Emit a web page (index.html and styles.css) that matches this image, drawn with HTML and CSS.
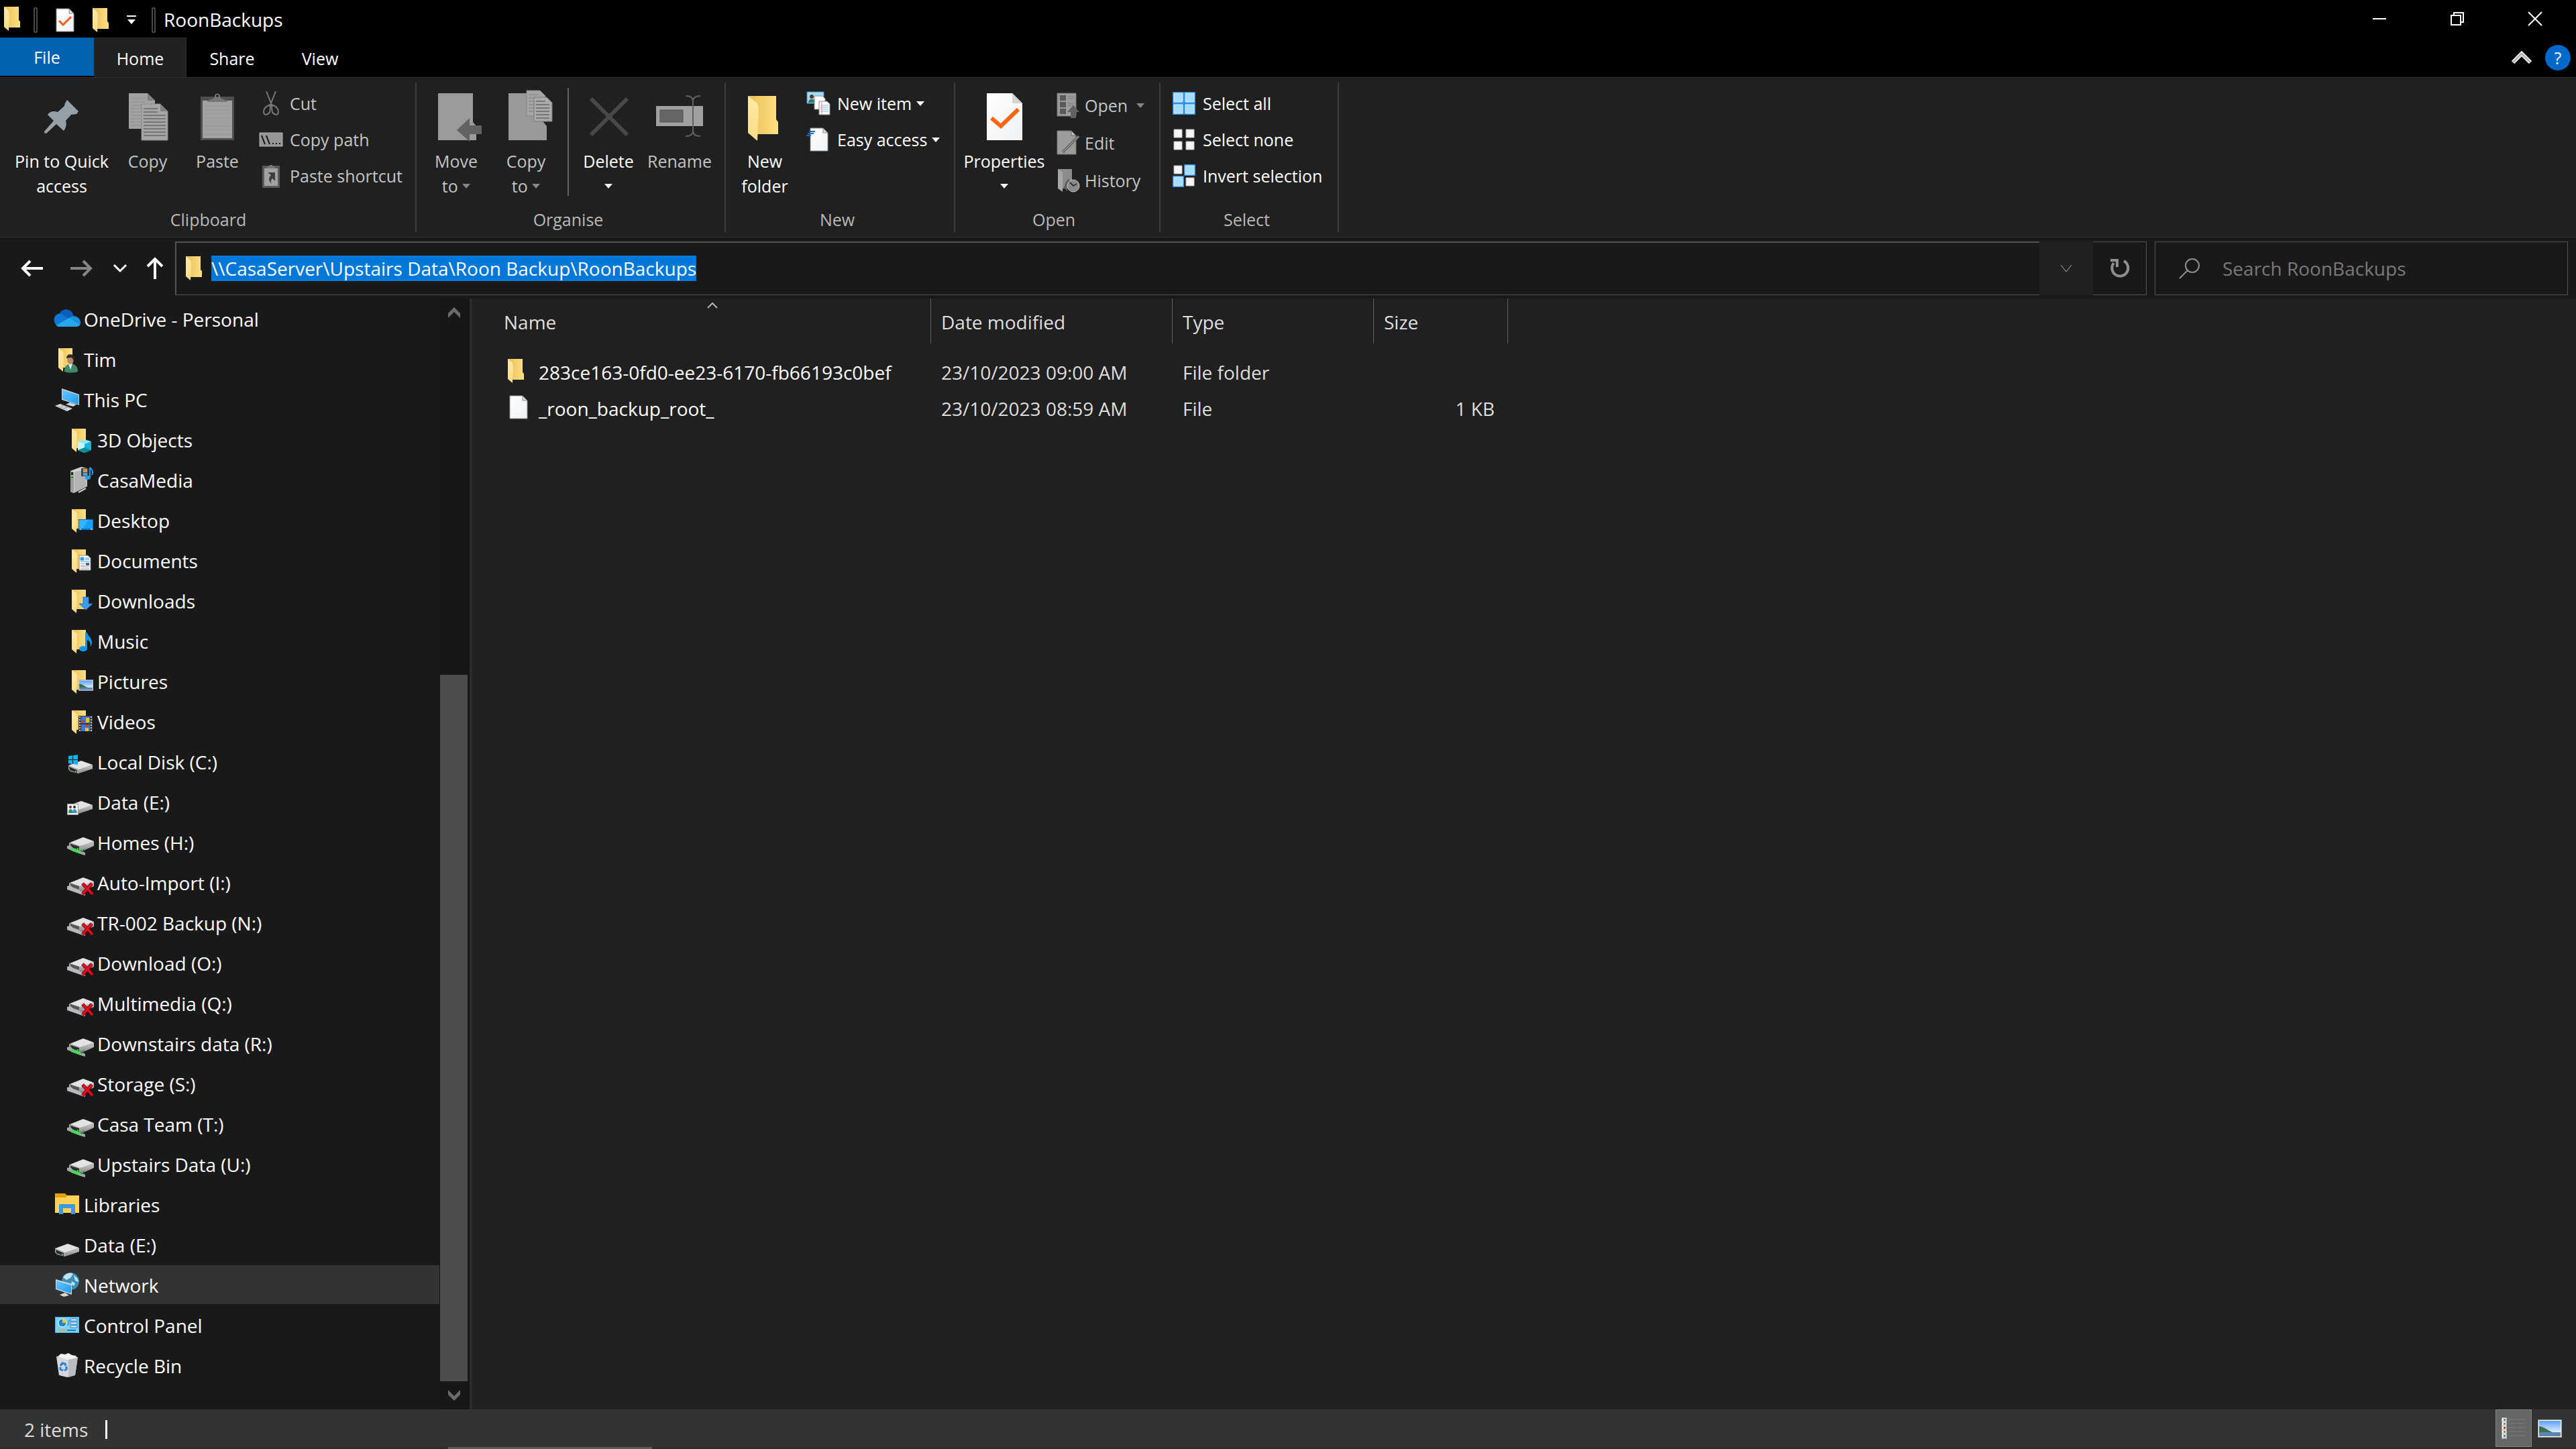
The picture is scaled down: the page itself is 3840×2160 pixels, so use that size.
FILE: index.html
```html
<!DOCTYPE html>
<html lang="en-GB">
<head>
    <meta charset="UTF-8">
    <meta name="viewport" content="width=device-width, initial-scale=1.0">
    <title>RoonBackups</title>
    <link rel="stylesheet" href="styles.css">
</head>
<body>
    <!-- Shared icons -->
    <svg class="sprite" width="0" height="0" aria-hidden="true">
        <defs>
            <linearGradient id="g-back" x1="0" y1="0" x2="1" y2="0">
                <stop offset="0" stop-color="#e8bf55"/>
                <stop offset="1" stop-color="#ffe083"/>
            </linearGradient>
            <linearGradient id="g-flap" x1="0" y1="0" x2="0" y2="1">
                <stop offset="0" stop-color="#ffe9a6"/>
                <stop offset="1" stop-color="#fbdc86"/>
            </linearGradient>
            <linearGradient id="g-paper" x1="0" y1="0" x2="1" y2="1">
                <stop offset="0" stop-color="#ffffff"/>
                <stop offset="1" stop-color="#eef1f4"/>
            </linearGradient>
            <linearGradient id="g-screen" x1="0" y1="0" x2="1" y2="1">
                <stop offset="0" stop-color="#6cc5ff"/>
                <stop offset="1" stop-color="#1a9bf5"/>
            </linearGradient>
            <linearGradient id="g-side" x1="0" y1="0" x2="0" y2="1">
                <stop offset="0" stop-color="#c9c9cb"/>
                <stop offset="1" stop-color="#8b8b8d"/>
            </linearGradient>
            <linearGradient id="g-sky" x1="0" y1="0" x2="0" y2="1">
                <stop offset="0" stop-color="#5c9ff5"/>
                <stop offset="1" stop-color="#e4f3ff"/>
            </linearGradient>
        </defs>
        <symbol id="folder" viewBox="0 0 24 36">
            <path d="M0 0h22v20l2 2v9H8L0 29z" fill="url(#g-back)"/>
            <path d="M0 0l7 6 1 6-1 24-7-6z" fill="url(#g-flap)"/>
        </symbol>
        <symbol id="folder-side" viewBox="0 0 40 40">
            <path d="M7 3h21v29H13l-6-2z" fill="url(#g-back)"/>
            <path d="M7 3l7 5 1 6-1 24-7-6z" fill="url(#g-flap)"/>
        </symbol>
        <symbol id="page" viewBox="0 0 28 36">
            <path d="M1 1h19l7 7v27H1z" fill="url(#g-paper)" stroke="#8a8a8a"/>
            <path d="M20 1v7h7z" fill="#dcdcdc" stroke="#8a8a8a"/>
        </symbol>
        <symbol id="page-check" viewBox="0 0 28 36">
            <path d="M1 1h19l7 7v27H1z" fill="url(#g-paper)" stroke="#8a8a8a"/>
            <path d="M20 1v7h7z" fill="#dcdcdc" stroke="#8a8a8a"/>
            <path d="M5 19l6 6L23 13" fill="none" stroke="#f4581a" stroke-width="3"/>
        </symbol>
        <symbol id="drive" viewBox="0 0 40 40">
            <path d="M2 25l19-7 17 6-21 8z" fill="#e3e3e5"/>
            <path d="M17 31l21-7v6l-21 7z" fill="url(#g-side)"/>
            <path d="M2 25l15 6v6L5 34l-3-3z" fill="#a8a8aa"/>
            <path d="M3 27l12 5v4L4 32z" fill="#2c2c2e"/>
            <path d="M12 33h2v2h-2z" fill="#35d13a"/>
        </symbol>
        <symbol id="netdrive" viewBox="0 0 40 40">
            <path d="M4 20l20-8 16 6-20 8z" fill="#e3e3e5"/>
            <path d="M19 25l21-7v7l-18 8-3-2z" fill="url(#g-side)"/>
            <path d="M3 20l16 5v7L3 28z" fill="#a8a8aa"/>
            <path d="M5 22l13 4v5L5 27z" fill="#2c2c2e"/>
            <path d="M15 28h2v2h-2z" fill="#35d13a"/>
            <path d="M0 25l5-1 4 4 18 7v4l-4-1L0 29z" fill="#a4a9a6"/>
            <path d="M6 27l14 5v5L6 32z" fill="#4fd35c"/>
            <path d="M20 33l6-4v2l-4 4z" fill="#1f9a3b"/>
        </symbol>
        <symbol id="netdrive-off" viewBox="0 0 40 40">
            <path d="M4 20l20-8 16 6-20 8z" fill="#e3e3e5"/>
            <path d="M19 25l21-7v7l-18 8-3-2z" fill="url(#g-side)"/>
            <path d="M3 20l16 5v7L3 28z" fill="#a8a8aa"/>
            <path d="M5 21l13 4v5L5 26z" fill="#57575a"/>
            <path d="M0 25l5-1 4 3 18 8v4l-4-1L0 30z" fill="#b9b9bd"/>
            <path d="M23 21l15 16M37 21L23 37" stroke="#7d0008" stroke-width="5"/>
            <path d="M23 21l15 16M37 21L23 37" stroke="#e81123" stroke-width="3"/>
        </symbol>
        <symbol id="picture" viewBox="0 0 36 27">
            <path d="M0 0h36v27H0z" fill="#9a9a9a"/>
            <path d="M1 1h34v25H1z" fill="#fff"/>
            <path d="M2 2h32v18H2z" fill="url(#g-sky)"/>
            <path d="M2 10c8 1 12 6 20 9l12 1H2z" fill="#39704d"/>
            <path d="M2 19h32v6H2z" fill="#5b86b4"/>
        </symbol>
    </svg>

    <header class="titlebar">
        <svg class="tb-icon" width="24" height="36"><use href="#folder"/></svg>
        <span class="tb-sep"></span>
        <button class="tb-btn" aria-label="Properties"><svg width="28" height="36"><use href="#page-check"/></svg></button>
        <button class="tb-btn" aria-label="New folder"><svg width="24" height="36"><use href="#folder"/></svg></button>
        <button class="tb-btn" aria-label="Customise toolbar">
            <svg width="14" height="14" viewBox="0 0 14 14"><path d="M0 0h14v2H0zM1 6h12l-6 7z" fill="#fff"/></svg>
        </button>
        <span class="tb-sep"></span>
        <h1 class="title">RoonBackups</h1>
        <div class="win-buttons">
            <button aria-label="Minimise"><svg width="20" height="20" viewBox="0 0 20 20"><path d="M0 9h20v2H0z" fill="#fff"/></svg></button>
            <button aria-label="Restore"><svg width="20" height="20" viewBox="0 0 20 20" fill="none" stroke="#fff" stroke-width="2"><path d="M1 5h14v14H1zM5 5V1h14v14h-4"/></svg></button>
            <button aria-label="Close"><svg width="20" height="20" viewBox="0 0 20 20"><path d="M0 0l20 20M20 0L0 20" stroke="#fff" stroke-width="2"/></svg></button>
        </div>
    </header>

    <nav class="tabs">
        <button class="tab tab-file">File</button>
        <button class="tab tab-active">Home</button>
        <button class="tab">Share</button>
        <button class="tab">View</button>
        <div class="tabs-right">
            <button aria-label="Minimise the ribbon"><svg width="30" height="20" viewBox="0 0 30 20"><path d="M2 17L15 4l13 13" fill="none" stroke="#fff" stroke-width="6"/><path d="M2 17L15 4l13 13" fill="none" stroke="#b5b5b5" stroke-width="3"/></svg></button>
            <button class="help" aria-label="Help">?</button>
        </div>
    </nav>

    <section class="ribbon">
        <div class="group group-clipboard">
            <div class="group-items">
                <button class="big big-pin">
                    <svg width="70" height="70" viewBox="0 0 70 70"><path d="M43 10l17 17-3 4-8 1-8 9c2 6 0 11-3 15L27 46 12 60l-3-1 0-2 14-16L14 32c3-5 9-6 15-4l10-9c0-3 2-6 4-9z" fill="#95a1a9"/></svg>
                    <span>Pin to Quick<br>access</span>
                </button>
                <button class="big dim">
                    <svg width="70" height="70" viewBox="0 0 70 70">
                        <path d="M7 0h28l11 11v42H7z" fill="#a2a2a2"/>
                        <path d="M35 0v11h11z" fill="#808080"/>
                        <path d="M10 8h22M10 13h22M10 18h22M10 23h15M10 28h15M10 33h15M10 38h15M10 43h15M10 48h15" stroke="#8e8e8e"/>
                        <path d="M26 16h28l11 11v43H26z" fill="#a6a6a6" stroke="#8a8a8a"/>
                        <path d="M54 16v11h11z" fill="#808080"/>
                        <path d="M29 23h21M29 28h21M29 33h33M29 38h33M29 43h33M29 48h33M29 53h33M29 58h33M29 63h33" stroke="#777" stroke-width="2"/>
                    </svg>
                    <span>Copy</span>
                </button>
                <button class="big dim">
                    <svg width="70" height="70" viewBox="0 0 70 70">
                        <path d="M10 5h50v65H10z" fill="#4e4e4e"/>
                        <path d="M13 11h44v56H13z" fill="#a2a2a2"/>
                        <path d="M14 19h42M14 25h42M14 31h42M14 37h42M14 43h42M14 49h42M14 55h42M14 61h42" stroke="#979797"/>
                        <path d="M19 13c2-4 12-4 12-8a4 4 0 0 1 8 0c0 4 10 4 12 8z" fill="#767676"/>
                        <circle cx="35" cy="4" r="3" fill="#333" stroke="#999"/>
                    </svg>
                    <span>Paste</span>
                </button>
                <div class="stack">
                    <button class="small dim">
                        <svg width="36" height="36" viewBox="0 0 36 36" fill="none" stroke="#777" stroke-width="2"><path d="M11 0l9 23M25 0l-9 23"/><path d="M17 20c-6 2-10 6-10 11 0 6 7 4 9 0 1-3 1-7 1-11zM19 20c6 2 10 6 10 11 0 6-7 4-9 0-1-3-1-7-1-11z"/></svg>
                        <span>Cut</span>
                    </button>
                    <button class="small dim">
                        <svg width="36" height="36" viewBox="0 0 36 36"><path d="M1 8h34v20H1z" fill="#969696" stroke="#b0b0b0"/><path d="M4 12l5 13M11 12l5 13" stroke="#111" stroke-width="2"/><path d="M20 23h2v2h-2zM25 23h2v2h-2zM30 23h2v2h-2z" fill="#111"/></svg>
                        <span>Copy path</span>
                    </button>
                    <button class="small dim">
                        <svg width="36" height="36" viewBox="0 0 36 36"><path d="M5 3h26v33H5z" fill="#5a5a5a"/><path d="M8 7h20v26H8z" fill="#a2a2a2"/><path d="M10 7c2-3 6-3 6-5h4c0 2 4 2 6 5z" fill="#777"/><path d="M13 13h11v13l-4-4c-2 2-3 5-1 8-5-4-5-9-1-13z" fill="#3f3f3f"/></svg>
                        <span>Paste shortcut</span>
                    </button>
                </div>
            </div>
            <div class="group-label">Clipboard</div>
        </div>

        <div class="group group-organise">
            <div class="group-items">
                <button class="big dim">
                    <svg width="70" height="70" viewBox="0 0 70 70"><path d="M8 0h52v43l5 6v21H8z" fill="#9b9b9b"/><path d="M36 55l19-18v11h18v13H55v11z" fill="#626262"/></svg>
                    <span>Move<br>to <i class="caret"></i></span>
                </button>
                <button class="big dim">
                    <svg width="70" height="70" viewBox="0 0 70 70"><path d="M9 0h52v43l5 6v21H9z" fill="#999"/><path d="M36-4h20l8 8v30H36z" fill="#a5a5a5" stroke="#868686"/><path d="M39 2h15M39 7h8M39 12h8M39 17h8M39 22h8M39 27h8" stroke="#808080"/><path d="M47 6h19l8 8v28H47z" fill="#aaa" stroke="#777"/><path d="M50 12h14M50 17h20M50 22h20M50 27h20M50 32h20M50 37h20" stroke="#777" stroke-width="2"/></svg>
                    <span>Copy<br>to <i class="caret"></i></span>
                </button>
                <span class="items-sep"></span>
                <button class="big big-delete">
                    <svg width="70" height="70" viewBox="0 0 70 70"><path d="M9 8l54 54M63 8L9 62" stroke="#484848" stroke-width="6"/></svg>
                    <span>Delete<br><i class="caret"></i></span>
                </button>
                <button class="big big-rename dim">
                    <svg width="70" height="70" viewBox="0 0 70 70"><path d="M0 19h70v30H0z" fill="#a0a0a0"/><path d="M6 25h34v18H6z" fill="#666" stroke="#505050"/><path d="M44 4c7 0 11 2 11 8v44c0 6-4 8-11 8M66 4c-7 0-11 2-11 8M55 56c0 6 4 8 11 8" fill="none" stroke="#5f5f5f" stroke-width="2"/></svg>
                    <span>Rename</span>
                </button>
            </div>
            <div class="group-label">Organise</div>
        </div>

        <div class="group group-new">
            <div class="group-items">
                <button class="big">
                    <svg width="70" height="70" viewBox="0 0 70 70"><path d="M10 4h42v35l3 4v18H22L10 58z" fill="url(#g-back)"/><path d="M10 4l14 11 2 8-2 48-14-12z" fill="url(#g-flap)"/></svg>
                    <span>New<br>folder</span>
                </button>
                <div class="stack">
                    <button class="small">
                        <svg width="36" height="36" viewBox="0 0 36 36"><path d="M1 1h25v17H1z" fill="#a6dbf8" stroke="#3d92cc"/><circle cx="8" cy="8" r="3" fill="#5a3b2a"/><path d="M3 17c0-7 10-7 10 0z" fill="#2f7d5b"/><path d="M12 7h12l4 4v16H12z" fill="#fff" stroke="#888"/><path d="M19 15h12l4 4v16H19z" fill="#fff" stroke="#888"/><path d="M21 21h12M21 24h12M21 27h12M21 30h12" stroke="#7db6e8"/><path d="M23 16v18" stroke="#e88"/></svg>
                        <span>New item <i class="caret"></i></span>
                    </button>
                    <button class="small">
                        <svg width="36" height="36" viewBox="0 0 36 36"><path d="M6 1h19l7 7v27H6z" fill="url(#g-paper)" stroke="#8a8a8a"/><path d="M25 1v7h7z" fill="#ddd" stroke="#8a8a8a"/><path d="M4 6h9M2 9h9M0 12h7" stroke="#1c6cb8" stroke-width="2"/></svg>
                        <span>Easy access <i class="caret"></i></span>
                    </button>
                </div>
            </div>
            <div class="group-label">New</div>
        </div>

        <div class="group group-open">
            <div class="group-items">
                <button class="big big-properties">
                    <svg width="70" height="70" viewBox="0 0 70 70"><path d="M9 0h38l15 15v55H9z" fill="url(#g-paper)"/><path d="M47 0v15h15z" fill="#d4d4d4"/><path d="M16 37l14 12 26-25" fill="none" stroke="#fb6514" stroke-width="6"/></svg>
                    <span>Properties<br><i class="caret"></i></span>
                </button>
                <div class="stack stack-open">
                    <button class="small dim">
                        <svg width="36" height="36" viewBox="0 0 36 36"><path d="M2 0h28v34H2z" fill="#9c9c9c" stroke="#777"/><path d="M6 3h9v8H6zM6 13h9v8H6zM6 23h9v8H6z" fill="#5a5a5a"/><path d="M18 5h9M18 8h9M18 15h9M18 18h9" stroke="#7a7a7a"/><path d="M26 18l9 10h-5v9h-8v-9h-5z" fill="#626262"/></svg>
                        <span>Open <i class="caret caret-gap"></i></span>
                    </button>
                    <button class="small dim">
                        <svg width="36" height="36" viewBox="0 0 36 36"><path d="M2 0h21l7 7v28H2z" fill="#9c9c9c" stroke="#777"/><path d="M23 0v7h7z" fill="#c2c2c2" stroke="#666"/><path d="M34 8L10 32" stroke="#686868" stroke-width="4"/><path d="M34 8L10 32" stroke="#aaa"/></svg>
                        <span>Edit</span>
                    </button>
                    <button class="small dim">
                        <svg width="36" height="36" viewBox="0 0 36 36"><path d="M3 1h21v29H3z" fill="#8c8c8c"/><path d="M3 1l7 5v29l-7-5z" fill="#a6a6a6"/><circle cx="26" cy="26" r="9" fill="#8a8a8a" stroke="#c0c0c0"/><path d="M21 21l5 5 5-3" fill="none" stroke="#333" stroke-width="2"/><path d="M20 17c-5 3-6 8-5 13l-3-3" fill="none" stroke="#5d5d5d" stroke-width="3"/></svg>
                        <span>History</span>
                    </button>
                </div>
            </div>
            <div class="group-label">Open</div>
        </div>

        <div class="group group-select">
            <div class="group-items">
                <div class="stack">
                    <button class="small">
                        <svg width="36" height="36" viewBox="0 0 36 36"><path d="M1 1h34v34H1z" fill="#2f93e6"/><path d="M3 3h13v13H3zM20 3h13v13H20zM3 20h13v13H3zM20 20h13v13H20z" fill="#a9dbff" stroke="#d9f0ff"/></svg>
                        <span>Select all</span>
                    </button>
                    <button class="small">
                        <svg width="36" height="36" viewBox="0 0 36 36"><path d="M3 3h12v12H3zM21 3h12v12H21zM3 21h12v12H3zM21 21h12v12H21z" fill="#f6f6f6" stroke="#bdbdbd"/></svg>
                        <span>Select none</span>
                    </button>
                    <button class="small">
                        <svg width="36" height="36" viewBox="0 0 36 36"><path d="M3 3h12v12H3zM21 21h12v12H21z" fill="#f6f6f6" stroke="#bdbdbd"/><path d="M18 1h17v17H18zM1 18h17v17H1z" fill="#2f93e6"/><path d="M20 3h13v13H20zM3 20h13v13H3z" fill="#a9dbff" stroke="#d9f0ff"/></svg>
                        <span>Invert selection</span>
                    </button>
                </div>
            </div>
            <div class="group-label">Select</div>
        </div>
    </section>

    <div class="addressbar">
        <button class="nav nav-back" aria-label="Back"><svg width="32" height="24" viewBox="0 0 32 24"><path d="M13 1L2 12l11 11M2 12h30" fill="none" stroke="#fff" stroke-width="4"/></svg></button>
        <button class="nav nav-forward" aria-label="Forward"><svg width="32" height="24" viewBox="0 0 32 24"><path d="M19 1l11 11-11 11M30 12H0" fill="none" stroke="#868686" stroke-width="4"/></svg></button>
        <button class="nav nav-recent" aria-label="Recent locations"><svg width="20" height="12" viewBox="0 0 20 12"><path d="M1 1l9 9 9-9" fill="none" stroke="#fff" stroke-width="3"/></svg></button>
        <button class="nav nav-up" aria-label="Up"><svg width="24" height="32" viewBox="0 0 24 32"><path d="M1 13L12 2l11 11M12 2v30" fill="none" stroke="#fff" stroke-width="4"/></svg></button>
        <div class="path">
            <svg width="24" height="36"><use href="#folder"/></svg>
            <input id="path" type="text" aria-label="Address" spellcheck="false" value="\\CasaServer\Upstairs Data\Roon Backup\RoonBackups">
        </div>
        <button class="path-drop" aria-label="Previous locations"><svg width="18" height="12" viewBox="0 0 18 12"><path d="M1 1l8 10 8-10" fill="none" stroke="#b4b4b4"/></svg></button>
        <button class="path-refresh" aria-label="Refresh"><svg width="30" height="30" viewBox="0 0 30 30"><path d="M6 7a12 12 0 1 0 15-3" fill="none" stroke="#8f8f8f" stroke-width="4"/><path d="M1 1h12v12H9V5H1z" fill="#8f8f8f"/></svg></button>
        <div class="search">
            <svg width="32" height="32" viewBox="0 0 32 32" fill="none" stroke="#8f8f8f" stroke-width="2"><circle cx="20" cy="12" r="10"/><path d="M13 19L1 31"/></svg>
            <input type="search" aria-label="Search" placeholder="Search RoonBackups">
        </div>
    </div>

    <main class="content">
        <aside class="sidebar">
            <ul class="tree">
                <li><a href="#"><svg viewBox="0 0 40 40"><path d="M8 13C12 2 27 3 30 15l-8 9z" fill="#0a5fb8"/><path d="M3 28C-3 18 4 10 11 12l13 7-16 12z" fill="#0f78d4"/><path d="M22 19c8-8 18-2 18 6 0 3-1 4-3 5z" fill="#1790df"/><path d="M4 29l19-11 16 10c-1 2-3 3-5 3H8c-2 0-4-1-4-2z" fill="#28a8ea"/></svg>OneDrive - Personal</a></li>
                <li><a href="#"><svg viewBox="0 0 40 40"><use href="#folder-side"/><path d="M16 38c0-8 3-11 10-12 7 1 10 5 10 12-6 2-14 2-20 0z" fill="#3f8a68"/><path d="M22 26l3 9 3-9z" fill="#e8eef0"/><ellipse cx="25" cy="20" rx="5" ry="7" fill="#b98d6a"/><path d="M19 18c0-8 13-8 12 2l-2 2c0-4-2-5-4-5z" fill="#2e2a28"/></svg>Tim</a></li>
                <li><a href="#"><svg viewBox="0 0 40 40"><path d="M12 3l26 9v16l-26-8z" fill="#cfd6dc"/><path d="M13 5l24 8v14l-24-8z" fill="url(#g-screen)"/><path d="M18 27l6-3 10 3-5 3z" fill="#cfd4d8"/><path d="M2 29l8-3 18 7-8 4z" fill="#dfe3e6"/><path d="M6 29l15 6M10 27l15 6M9 31l6-2M14 33l6-2" stroke="#9aa0a5"/></svg>This PC</a></li>
                <li class="sub"><a href="#"><svg viewBox="0 0 40 40"><use href="#folder-side"/><path d="M16 22l10-3 10 3-10 5z" fill="#8feaf0"/><path d="M16 22l10 4v13l-10-4z" fill="#c8f3f7"/><path d="M36 22l-10 4v13l10-4z" fill="#19b6dc"/><path d="M16 35l10-4 10 4-10 4z" fill="#0b8d9b"/></svg>3D Objects</a></li>
                <li class="sub"><a href="#"><svg viewBox="0 0 40 40"><path d="M5 6l16-6 9 2v27L10 39l-5-2z" fill="#d0d0d2"/><path d="M5 6l5 2v31l-5-2z" fill="#9b9b9e"/><path d="M11 8l18-5v26l-18 9z" fill="#b4b4b7"/><path d="M6 8h3v8H6z" fill="#222"/><path d="M6 12h3v3H6z" fill="#6fd52a"/><path d="M17 38l11-6" stroke="#ccc" stroke-width="2"/><path d="M21 2h11v12H21z" fill="#3a4a57"/><path d="M24 3h6v5h-6z" fill="#e0944a"/><path d="M24 9h6v4h-6z" fill="#4da3e8"/><path d="M34 1v14M34 1c4 3 5 7 3 11" stroke="#2f9be6" stroke-width="2" fill="none"/><ellipse cx="31" cy="16" rx="4" ry="3" fill="#2f9be6"/></svg>CasaMedia</a></li>
                <li class="sub"><a href="#"><svg viewBox="0 0 40 40"><use href="#folder-side"/><path d="M17 18h22v16H17z" fill="#0a6fc0"/><path d="M18 19h20v13H18z" fill="#14a0ff"/><path d="M18 19h14l-9 13h-5z" fill="#3db0ff"/><path d="M19 33h2M35 33h3" stroke="#fff"/></svg>Desktop</a></li>
                <li class="sub"><a href="#"><svg viewBox="0 0 40 40"><use href="#folder-side"/><path d="M18 12h13l4 4v18H18z" fill="#fff" stroke="#8a8a8a"/><path d="M20 15h5v4h-5zM27 16h6M27 18h6M20 21h14" fill="#3b9ade" stroke="#3b9ade"/><path d="M20 24h7M20 27h7M20 29h13M20 32h13" stroke="#999"/><path d="M28 23h5v4h-5z" fill="#41658f"/></svg>Documents</a></li>
                <li class="sub"><a href="#"><svg viewBox="0 0 40 40"><use href="#folder-side"/><path d="M24 14h8v10h6L28 33l-10-9h6z" fill="#3d9be9" stroke="#1e78c2"/></svg>Downloads</a></li>
                <li class="sub"><a href="#"><svg viewBox="0 0 40 40"><use href="#folder-side"/><path d="M27 7h3c1 6 7 7 7 15 0 3-1 4-2 6 0-7-2-9-5-10v13h-3z" fill="#0f94ee"/><ellipse cx="24" cy="31" rx="6" ry="4" fill="#0f9bf8"/></svg>Music</a></li>
                <li class="sub"><a href="#"><svg viewBox="0 0 40 40"><use href="#folder-side"/><use href="#picture" x="17" y="17" width="22" height="17"/></svg>Pictures</a></li>
                <li class="sub"><a href="#"><svg viewBox="0 0 40 40"><use href="#folder-side"/><path d="M17 11h21v23H17z" fill="#3a3a3c"/><path d="M21 12h13v10H21zM21 24h13v10H21z" fill="#3f78d8"/><path d="M28 14h5v7h-5zM27 29h5v5h-5z" fill="#e5c22e"/><path d="M22 18h4v3h-4zM28 24h4v3h-4z" fill="#c8402f"/><path d="M19 12v22M36 12v22" stroke="#c5c5c5" stroke-width="2" stroke-dasharray="2 2"/></svg>Videos</a></li>
                <li class="sub"><a href="#"><svg viewBox="0 0 40 40"><use href="#drive"/><path d="M2 11l6-1v6H2zM9 10l7-1v7H9zM2 17h6v6l-6-1zM9 17h7v7l-7-1z" fill="#00b7f1"/></svg>Local Disk (C:)</a></li>
                <li class="sub"><a href="#"><svg viewBox="0 0 40 40"><use href="#drive"/><path d="M0 22h17v17H0z" fill="#999"/><path d="M1 23h15v15H1z" fill="#f5f5f5"/><circle cx="5" cy="27" r="2" fill="#5a3b2a"/><circle cx="11" cy="27" r="2" fill="#2e2a28"/><path d="M2 36c0-8 6-8 7 0z" fill="#3f8a68"/><path d="M8 36c0-8 6-8 7 0z" fill="#3c8fd0"/></svg>Data (E:)</a></li>
                <li class="sub"><a href="#"><svg viewBox="0 0 40 40"><use href="#netdrive"/></svg>Homes (H:)</a></li>
                <li class="sub"><a href="#"><svg viewBox="0 0 40 40"><use href="#netdrive-off"/></svg>Auto-Import (I:)</a></li>
                <li class="sub"><a href="#"><svg viewBox="0 0 40 40"><use href="#netdrive-off"/></svg>TR-002 Backup (N:)</a></li>
                <li class="sub"><a href="#"><svg viewBox="0 0 40 40"><use href="#netdrive-off"/></svg>Download (O:)</a></li>
                <li class="sub"><a href="#"><svg viewBox="0 0 40 40"><use href="#netdrive-off"/></svg>Multimedia (Q:)</a></li>
                <li class="sub"><a href="#"><svg viewBox="0 0 40 40"><use href="#netdrive"/></svg>Downstairs data (R:)</a></li>
                <li class="sub"><a href="#"><svg viewBox="0 0 40 40"><use href="#netdrive-off"/></svg>Storage (S:)</a></li>
                <li class="sub"><a href="#"><svg viewBox="0 0 40 40"><use href="#netdrive"/></svg>Casa Team (T:)</a></li>
                <li class="sub"><a href="#"><svg viewBox="0 0 40 40"><use href="#netdrive"/></svg>Upstairs Data (U:)</a></li>
                <li><a href="#"><svg viewBox="0 0 40 40"><path d="M2 3h15l3 3-3 3H2z" fill="#e3a008"/><path d="M2 9h15l3-3h18v26H2z" fill="#ffd257"/><path d="M8 34V21c0-2 1-2 2-2h20c1 0 2 0 2 2v13h-6v-9H14v9z" fill="#3d97e2"/></svg>Libraries</a></li>
                <li><a href="#"><svg viewBox="0 0 40 40"><use href="#drive"/></svg>Data (E:)</a></li>
                <li class="selected"><a href="#"><svg viewBox="0 0 40 40"><circle cx="25" cy="14" r="13" fill="#3e8fb8"/><path d="M14 8c4-7 12-7 15-5l-4 6-6 3zM30 5c5 3 7 7 7 10l-5-2zM27 14l5 3-2 4-4-3z" fill="#bfe3ee"/><path d="M3 11l24 7v16L3 26z" fill="#cfd6dc"/><path d="M4 13l22 7v12L4 25z" fill="url(#g-screen)"/><path d="M9 34l8-3 6 4-8 2z" fill="#d5d9dc"/></svg>Network</a></li>
                <li><a href="#"><svg viewBox="0 0 40 40"><path d="M2 7h36v24H2z" fill="#45b0f2"/><path d="M3 8h34v22H3z" fill="#7dd0fb"/><circle cx="13" cy="16" r="6" fill="#1f83cf" stroke="#fff"/><path d="M13 16v-6a6 6 0 0 1 6 6z" fill="#f3c33c"/><path d="M25 10h10v3H25zM25 15h10v3H25zM25 20h10v3H25z" fill="#fff" stroke="#1d78bd"/><path d="M20 19h2v-6h3" fill="none" stroke="#1d78bd"/><path d="M7 27h11" stroke="#e7a53a" stroke-width="2"/><path d="M20 27h13" stroke="#1d78bd" stroke-width="2"/></svg>Control Panel</a></li>
                <li><a href="#"><svg viewBox="0 0 40 40"><path d="M4 6l32 1-4 27-12 3-12-3z" fill="#d5d7da"/><path d="M22 8l14-1-4 27-10 3z" fill="#b9bcc0"/><path d="M6 6l5-4 6 1 5-2 5 3 6 1 2 3-14 3z" fill="#f1f2f3"/><path d="M10 20l3-4 4 1 1 3M19 21l0 4-3 2M14 27l-4-2 0-3" fill="none" stroke="#1f83d6" stroke-width="3"/></svg>Recycle Bin</a></li>
            </ul>
            <div class="scrollbar">
                <button aria-label="Scroll up"><svg width="18" height="16" viewBox="0 0 18 16"><path d="M0 9l9-9 9 9v7L9 7l-9 9z" fill="#6b6b6b"/></svg></button>
                <div class="track"><div class="thumb"></div></div>
                <button aria-label="Scroll down"><svg width="18" height="16" viewBox="0 0 18 16"><path d="M0 7l9 9 9-9V0L9 9 0 0z" fill="#6b6b6b"/></svg></button>
            </div>
        </aside>

        <section class="files">
            <table>
                <colgroup>
                    <col class="col-name">
                    <col class="col-date">
                    <col class="col-type">
                    <col class="col-size">
                </colgroup>
                <thead>
                    <tr>
                        <th class="first">Name<svg class="sort" width="16" height="9" viewBox="0 0 16 9"><path d="M1 8l7-7 7 7" fill="none" stroke="#b4b4b4" stroke-width="2"/></svg></th>
                        <th>Date modified</th>
                        <th>Type</th>
                        <th>Size</th>
                    </tr>
                </thead>
                <tbody>
                    <tr>
                        <td class="first"><div class="file"><svg width="28" height="36" viewBox="2 0 28 36"><use href="#folder" width="24" height="36"/></svg>283ce163-0fd0-ee23-6170-fb66193c0bef</div></td>
                        <td>23/10/2023 09:00 AM</td>
                        <td>File folder</td>
                        <td class="size"></td>
                    </tr>
                    <tr>
                        <td class="first"><div class="file"><svg width="28" height="36"><use href="#page"/></svg>_roon_backup_root_</div></td>
                        <td>23/10/2023 08:59 AM</td>
                        <td>File</td>
                        <td class="size">1 KB</td>
                    </tr>
                </tbody>
            </table>
        </section>
    </main>

    <footer class="status">
        <span class="count">2 items</span>
        <button class="view view-active" aria-label="Details view">
            <svg width="36" height="32" viewBox="0 0 36 32"><path d="M0 0h8v32H0z" fill="#aaa"/><path d="M1 1h6v5H1zM1 7h6v5H1zM1 13h6v5H1zM1 19h6v5H1zM1 25h6v5H1z" fill="#fff"/><path d="M3 2h3v3H3zM3 26h3v3H3z" fill="#3f80b0"/><path d="M3 8h3v3H3zM3 20h3v3H3z" fill="#8a8a3c"/><path d="M3 14h3v3H3z" fill="#c8301c"/><path d="M10 3h12M24 3h12M10 9h12M24 9h12M10 15h12M24 15h12M10 21h12M24 21h12M10 27h12M24 27h12" stroke="#7c7c7c"/></svg>
        </button>
        <button class="view" aria-label="Large icons view"><svg width="36" height="27"><use href="#picture"/></svg></button>
    </footer>
    <div class="edge"><div class="edge-bar"></div></div>

    <script>
        let path = document.getElementById("path");
        path.focus();
        path.select();
    </script>
</body>
</html>
```
FILE: styles.css
```css
* {
    box-sizing: border-box;
}
body {
    margin: 0;
    height: 100vh;
    display: flex;
    flex-direction: column;
    overflow: hidden;
    background: #202020;
    color: #fff;
    font-family: "Open Sans", "Noto Sans", sans-serif;
    font-size: 28px;
}
button, input {
    font: inherit;
    color: inherit;
    background: none;
    border: 0;
    padding: 0;
    outline: none;
}
button {
    display: flex;
    align-items: center;
    justify-content: center;
}
svg {
    display: block;
    flex: none;
    overflow: visible;
}
.sprite {
    position: absolute;
}

/* title bar */
.titlebar {
    display: flex;
    align-items: center;
    height: 56px;
    background: #000;
}
.tb-icon {
    margin: 0 20px 0 6px;
}
.tb-sep {
    width: 6px;
    height: 38px;
    border: 2px solid #484848;
    border-radius: 2px;
    margin-top: 4px;
}
.tb-btn {
    margin-left: 27px;
    height: 40px;
    padding-top: 4px;
}
.tb-btn + .tb-sep {
    margin-left: 23px;
}
.title {
    margin: 2px 0 0 12px;
    font-size: 28px;
    font-weight: normal;
    line-height: 38px;
}
.win-buttons {
    display: flex;
    margin-left: auto;
    padding-right: 3px;
}
.win-buttons button {
    width: 116px;
    height: 56px;
}

/* tabs */
.tabs {
    display: flex;
    height: 59px;
    background: #000;
    font-size: 25px;
}
.tab {
    width: 136px;
    padding-top: 2px;
    margin-right: -5px;
}
.tab-file {
    width: 140px;
    height: 57px;
    margin: 0;
    padding: 0;
    background: #0063b1;
}
.tab-active {
    width: 138px;
    margin: 0;
    background: #202020;
    border: 1px solid #2b2b2b;
    border-bottom: 0;
}
.tabs-right {
    display: flex;
    align-items: center;
    gap: 20px;
    margin-left: auto;
    padding-right: 8px;
}
.help {
    width: 38px;
    height: 38px;
    border-radius: 50%;
    background: #0069ca;
}

/* ribbon */
.ribbon {
    display: flex;
    height: 239px;
    padding: 7px 0;
    background: #202020;
    border-top: 1px solid #2f2f2f;
    border-bottom: 1px solid #2f2f2f;
    font-size: 25px;
    line-height: 37px;
}
.group {
    display: flex;
    flex-direction: column;
    justify-content: space-between;
    border-right: 2px solid #3d3d3d;
}
.group-clipboard {
    width: 621px;
    padding-left: 16px;
}
.group-organise {
    width: 461px;
    padding-left: 7px;
}
.group-new {
    width: 342px;
    padding-left: 6px;
}
.group-open {
    width: 306px;
    padding-left: 4px;
}
.group-select {
    width: 266px;
    padding-left: 7px;
}
.group-items {
    display: flex;
}
.group-label {
    color: #b8b8b8;
    text-align: center;
    padding-right: 14px;
}
.big {
    flex-direction: column;
    justify-content: flex-start;
    gap: 13px;
    width: 104px;
    height: 176px;
    padding-top: 16px;
    white-space: nowrap;
}
.big-pin {
    width: 152px;
}
.big-delete {
    width: 100px;
}
.big-rename {
    width: 112px;
}
.big-properties {
    width: 138px;
}
.dim {
    color: #c3c3c3;
}
.stack {
    display: flex;
    flex-direction: column;
    padding-top: 4px;
}
.small {
    justify-content: flex-start;
    gap: 10px;
    height: 54px;
    padding-left: 10px;
    white-space: nowrap;
}
.stack-open {
    padding-top: 6px;
}
.stack-open .small {
    height: 56px;
    padding-left: 8px;
    gap: 7px;
}
.caret {
    display: inline-block;
    border: 6px solid transparent;
    border-top: 7px solid currentColor;
    border-bottom: 0;
    vertical-align: 6px;
}
.dim .caret {
    border-top-color: #868686;
}
.caret-gap {
    margin-left: 6px;
}
.items-sep {
    width: 2px;
    height: 161px;
    margin: 8px 9px 0 10px;
    background: #636363;
}

/* address bar */
.addressbar {
    display: flex;
    align-items: center;
    height: 91px;
    padding: 0 12px;
    background: #191919;
}
.nav, .path, .path-drop, .path-refresh, .search {
    height: 80px;
}
.nav-back {
    width: 72px;
}
.nav-forward {
    width: 74px;
}
.nav-recent {
    width: 42px;
}
.nav-up {
    width: 61px;
}
.path {
    flex: 1;
    display: flex;
    align-items: center;
    gap: 14px;
    padding-left: 14px;
    border: solid #535353;
    border-width: 2px 0 1px 2px;
}
.path input {
    flex: 1;
    height: 42px;
}
.path input::selection {
    background: #0078d7;
    color: #fff;
}
.path-drop {
    width: 80px;
    background: #202020;
}
.path-refresh {
    width: 80px;
    border: 1px solid #535353;
    border-left: 0;
}
.search {
    display: flex;
    align-items: center;
    gap: 33px;
    width: 616px;
    margin-left: 12px;
    padding-left: 35px;
    border: 1px solid #535353;
}
.search input {
    flex: 1;
    min-width: 0;
}
.search input::placeholder {
    color: #797979;
    opacity: 1;
}

/* sidebar */
.content {
    flex: 1;
    display: flex;
    min-height: 0;
}
.sidebar {
    display: flex;
    width: 704px;
    background: #191919;
    border-right: 4px solid #2b2b2b;
}
.tree {
    flex: 1;
    margin: 0;
    padding: 1px 0 0;
    list-style: none;
}
.tree li {
    height: 58px;
    margin-bottom: 2px;
    padding-left: 80px;
}
.tree .sub {
    padding-left: 100px;
}
.tree .selected {
    background: #333;
}
.tree a {
    display: flex;
    align-items: center;
    gap: 5px;
    height: 60px;
    color: #fff;
    text-decoration: none;
}
.tree svg {
    width: 40px;
    height: 40px;
}
.scrollbar {
    display: flex;
    flex-direction: column;
    width: 45px;
    padding: 0 3px 0 1px;
    background: #171717;
}
.scrollbar button {
    height: 42px;
}
.track {
    flex: 1;
    display: flex;
    align-items: flex-end;
}
.thumb {
    width: 100%;
    height: 67%;
    background: #4d4d4d;
}

/* file list */
.files {
    flex: 1;
}
table {
    width: 1544px;
    table-layout: fixed;
    border-spacing: 0;
    line-height: 38px;
}
.col-name {
    width: 684px;
}
.col-date {
    width: 360px;
}
.col-type {
    width: 300px;
}
.col-size {
    width: 200px;
}
th, td {
    padding: 0 0 0 15px;
    text-align: left;
    font-weight: normal;
    color: #dedede;
}
th {
    position: relative;
    height: 67px;
    padding-top: 3px;
    border-right: 1px solid #636363;
}
th.first {
    padding-left: 47px;
}
.sort {
    position: absolute;
    top: 6px;
    left: 350px;
}
tbody::before {
    content: "";
    display: block;
    height: 16px;
}
td {
    height: 54px;
}
td.first {
    padding-left: 55px;
    color: #fff;
}
.file {
    display: flex;
    align-items: center;
    gap: 16px;
}
.file svg {
    margin-top: -4px;
}
.size {
    padding-right: 20px;
    text-align: right;
}

/* status bar */
.status {
    display: flex;
    height: 56px;
    padding-right: 12px;
    background: #333;
}
.count {
    align-self: center;
    margin: 4px auto 0 0;
    padding: 0 26px 0 36px;
    line-height: 28px;
    border-right: 3px solid #fff;
    color: #dedede;
}
.view {
    width: 54px;
}
.view-active {
    background: #666;
    border: 1px solid #838383;
}
.edge {
    height: 3px;
    padding-left: 668px;
    background: #2b2b2b;
}
.edge-bar {
    width: 304px;
    height: 3px;
    background: #5c5c5c;
}
```
